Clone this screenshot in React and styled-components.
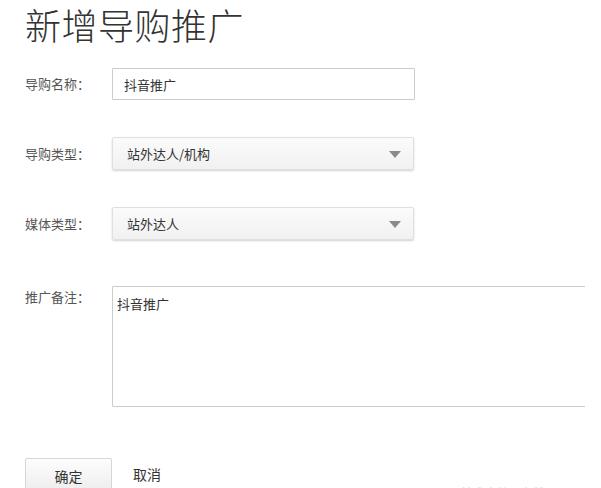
import React from 'react';
import styled, { createGlobalStyle } from 'styled-components';

const GlobalStyle = createGlobalStyle`
  html, body {
    margin: 0;
    padding: 0;
    background: #fff;
    overflow: hidden;
  }
  body {
    font-family: "Noto Sans CJK SC", "Noto Sans", sans-serif;
    color: #333;
  }
`;

const Page = styled.div`
  width: 560px;
  height: 488px;
  padding-left: 25px;
  overflow: hidden;
`;

const Title = styled.h1`
  margin: 0;
  font-size: 36px;
  line-height: 49px;
  font-weight: 300;
  color: #333;
  letter-spacing: 0.5px;
`;

const Row = styled.div`
  display: flex;
  align-items: ${p => (p.$top ? 'flex-start' : 'center')};
  margin-top: ${p => p.$space}px;
`;

const Label = styled.label`
  width: 87px;
  flex-shrink: 0;
  font-size: 13px;
  line-height: 20px;
  color: #555;
  padding-top: ${p => (p.$top ? '1px' : '0')};
`;

const TextInput = styled.input`
  box-sizing: border-box;
  width: 303px;
  height: 32px;
  padding: 0 11px;
  border: 1px solid #ccc;
  border-radius: 1px;
  font-family: inherit;
  font-size: 13px;
  color: #333;
  outline: none;
`;

const SelectBox = styled.div`
  box-sizing: border-box;
  width: 302px;
  height: 33px;
  display: flex;
  align-items: center;
  justify-content: space-between;
  padding: 0 12px 0 14px;
  border: 1px solid #e0e0e0;
  border-radius: 2px;
  background: linear-gradient(#fbfbfb, #f1f1f1);
  box-shadow: 0 1px 2px rgba(0, 0, 0, 0.18);
  font-size: 13px;
  color: #333;
`;

const Arrow = styled.span`
  width: 0;
  height: 0;
  border-left: 6px solid transparent;
  border-right: 6px solid transparent;
  border-top: 7px solid #8a8a8a;
  margin-top: 1px;
`;

const TextArea = styled.textarea`
  box-sizing: border-box;
  flex-shrink: 0;
  width: 520px;
  height: 121px;
  padding: 8px 4px;
  border: 1px solid #ccc;
  border-radius: 1px;
  font-family: inherit;
  font-size: 13px;
  line-height: 18px;
  color: #333;
  resize: none;
  outline: none;
`;

const Actions = styled.div`
  display: flex;
  align-items: flex-start;
  margin-top: 51px;
`;

const SubmitButton = styled.button`
  box-sizing: border-box;
  width: 87px;
  height: 36px;
  border: 1px solid #d6d6d6;
  border-radius: 2px;
  background: linear-gradient(#fdfdfd, #ececec);
  font-family: inherit;
  font-size: 14px;
  color: #333;
  padding: 0;
  cursor: pointer;
`;

const CancelLink = styled.a`
  margin-left: 21px;
  margin-top: 6px;
  font-size: 14px;
  line-height: 20px;
  color: #333;
  text-decoration: none;
  cursor: pointer;
`;

const FooterNote = styled.span`
  margin-left: auto;
  margin-right: 40px;
  margin-top: 27px;
  font-size: 12px;
  line-height: 16px;
  color: #d4d4d4;
  white-space: nowrap;
`;

export default function App() {
  return (
    <>
      <GlobalStyle />
      <Page>
        <Title>新增导购推广</Title>

        <Row $space={19}>
          <Label>导购名称：</Label>
          <TextInput defaultValue="抖音推广" />
        </Row>

        <Row $space={37}>
          <Label>导购类型：</Label>
          <SelectBox>
            <span>站外达人/机构</span>
            <Arrow />
          </SelectBox>
        </Row>

        <Row $space={37}>
          <Label>媒体类型：</Label>
          <SelectBox>
            <span>站外达人</span>
            <Arrow />
          </SelectBox>
        </Row>

        <Row $space={46} $top>
          <Label $top>推广备注：</Label>
          <TextArea defaultValue="抖音推广" />
        </Row>

        <Actions>
          <SubmitButton>确定</SubmitButton>
          <CancelLink>取消</CancelLink>
          <FooterNote>技术支持：有赞</FooterNote>
        </Actions>
      </Page>
    </>
  );
}
